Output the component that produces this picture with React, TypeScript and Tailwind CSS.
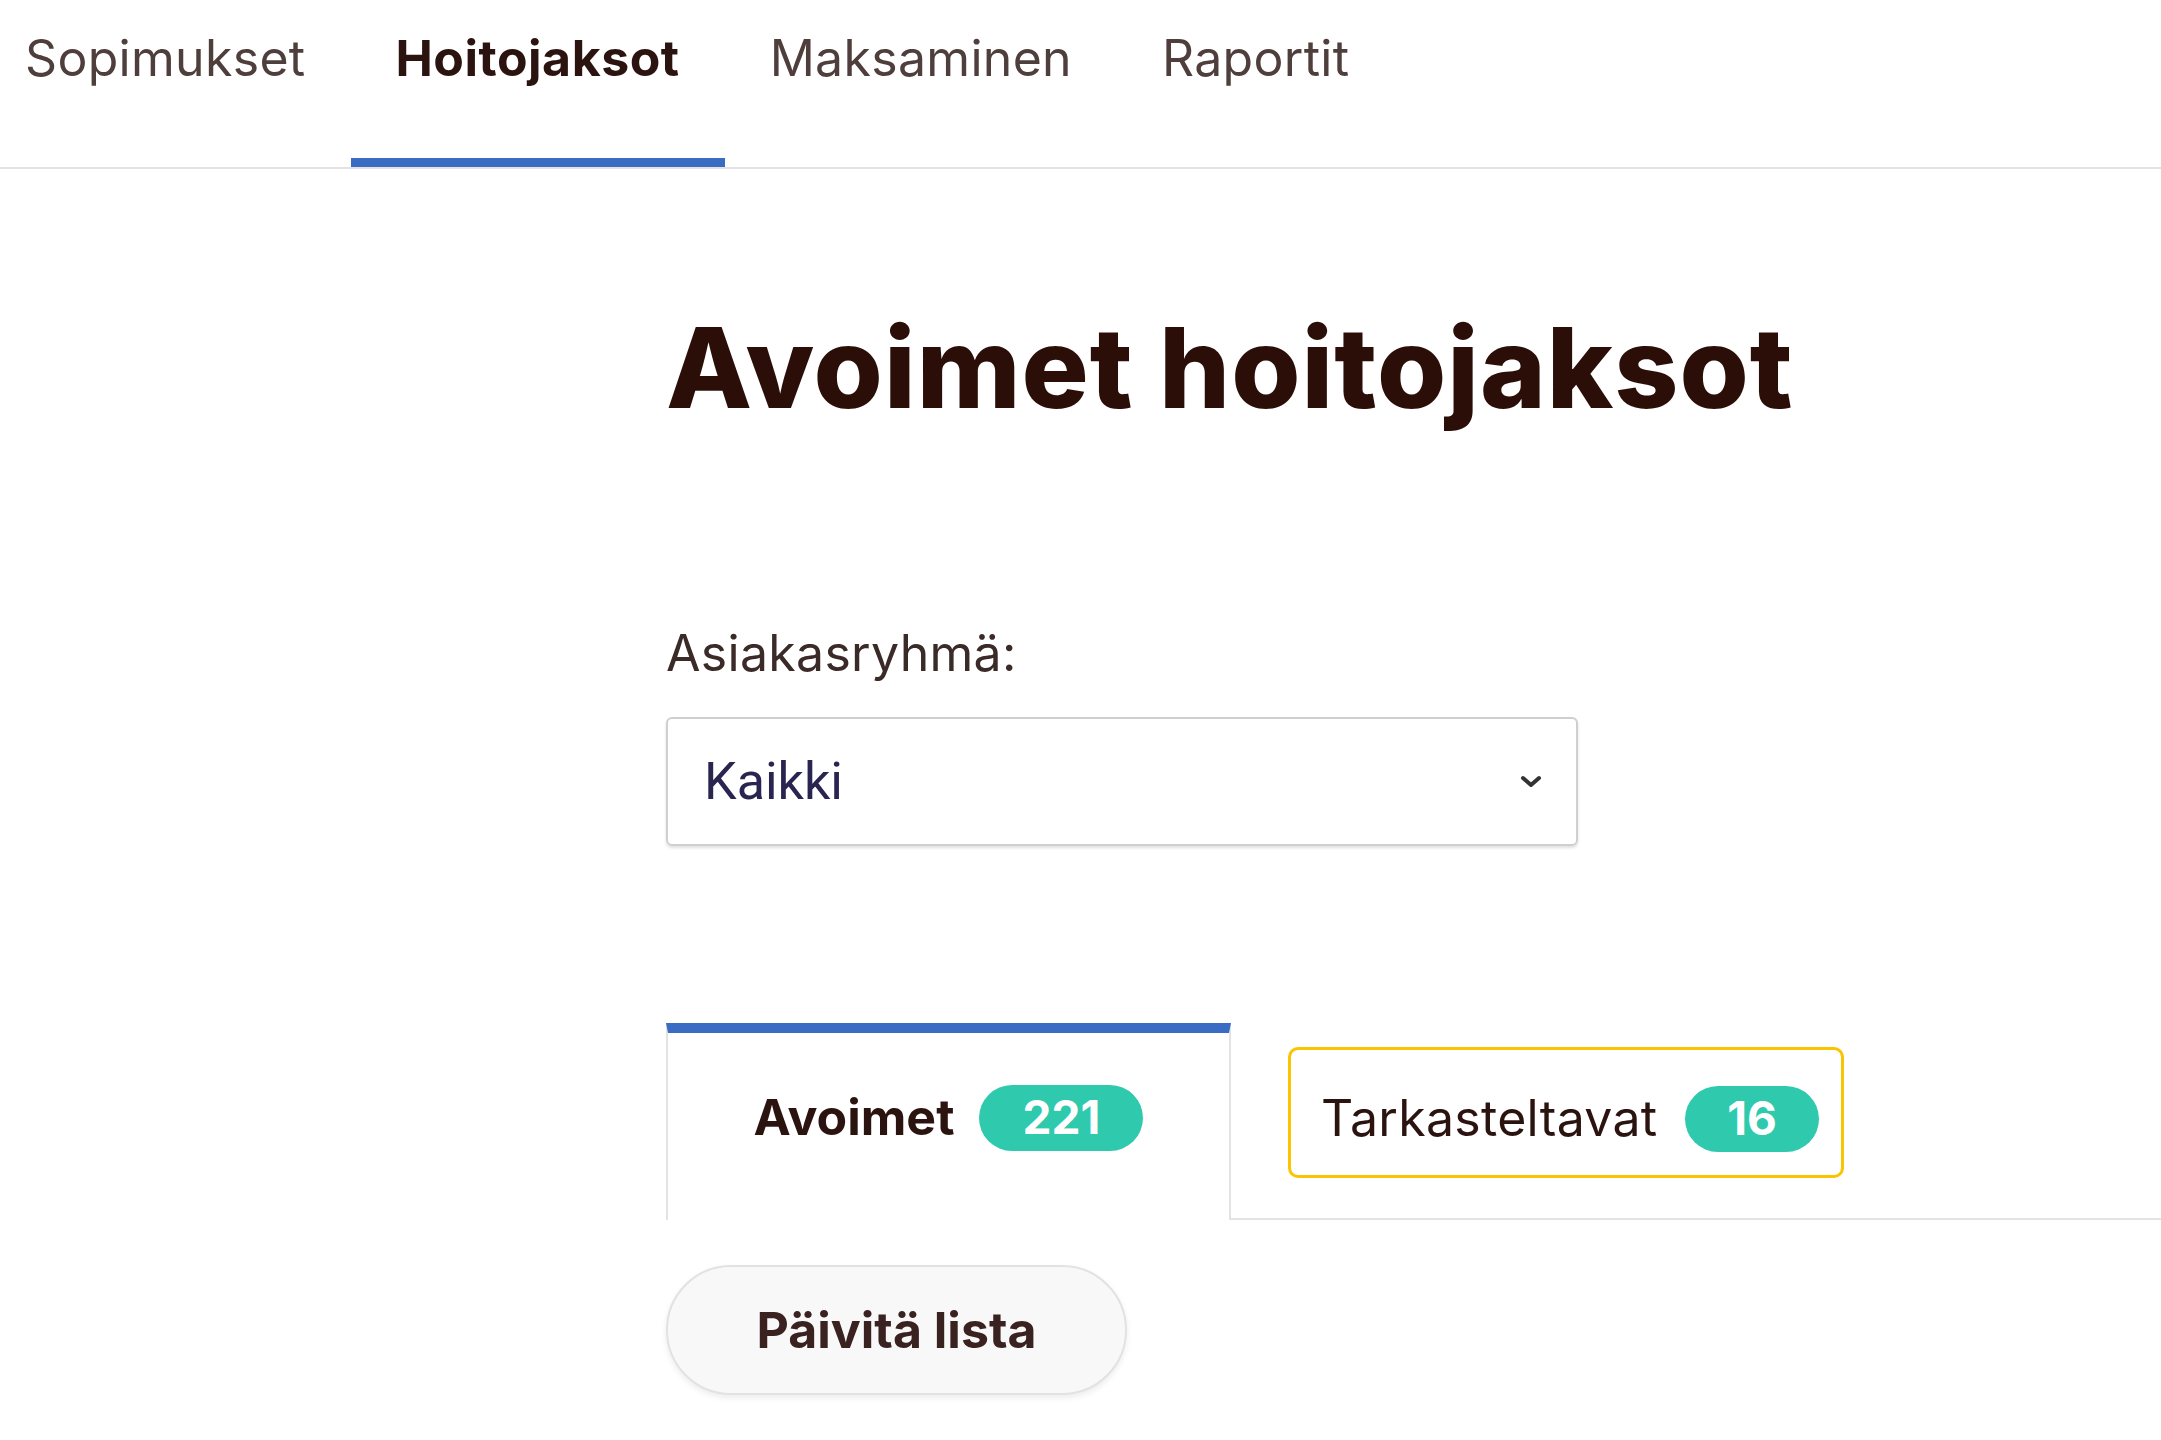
import React from "react";

const navItems = ["Sopimukset", "Hoitojaksot", "Maksaminen", "Raportit"];

export default function App() {
  return (
    <div className="min-h-screen w-full bg-white text-[#2b1410]" style={{ fontFamily: "Inter, 'Noto Sans', sans-serif" }}>
      <nav className="flex border-b-2 border-[#e3e3e3]">
        {navItems.map((item, i) => {
          const active = item === "Hoitojaksot";
          return (
            <div
              key={item}
              className={`h-[167px] flex flex-col ${i === 0 ? "pl-[25px] pr-[45px]" : "px-[45px]"} ${active ? "border-b-[9px] border-[#3b6cc4]" : "border-b-[9px] border-transparent"}`}
            >
              <span className={`pt-[28px] text-[50px] leading-[60px] ${active ? "font-bold text-[#2b1410] tracking-[0.5px]" : "font-normal text-[#4f3f3c] tracking-[0.3px]"}`}>
                {item}
              </span>
            </div>
          );
        })}
      </nav>

      <main className="pl-[666px]">
        <h1 className="pt-[128px] text-[112px] leading-[140px] font-extrabold text-[#2b0e07] tracking-[1px]" style={{ fontFamily: "Inter, 'Noto Sans', sans-serif" }}>
          Avoimet hoitojaksot
        </h1>

        <div className="mt-[186px] text-[50px] leading-[60px] text-[#3b2b28] tracking-[0.3px]">Asiakasryhmä:</div>

        <div className="mt-[34px] w-[912px] h-[129px] rounded-[6px] border-2 border-[#cfcfcf] shadow-[0_2px_3px_rgba(0,0,0,0.12)] flex items-center justify-between pl-[36px] pr-[34px]">
          <span className="text-[52px] text-[#2a2450]" style={{ fontFamily: "Roboto, 'Liberation Sans', sans-serif" }}>Kaikki</span>
          <svg width="22" height="14" viewBox="0 0 22 14" fill="none">
            <path d="M3 3 L11 10 L19 3" stroke="#333" strokeWidth="4" strokeLinecap="round" strokeLinejoin="round" />
          </svg>
        </div>

        <div className="mt-[177px] flex items-start border-b-2 border-[#e3e3e3]">
          <div className="-mb-[2px] w-[565px] h-[197px] bg-white border-t-[10px] border-t-[#3b6cc4] border-l-2 border-r-2 border-l-[#e3e3e3] border-r-[#e3e3e3] flex items-center justify-center gap-[25px] pb-[18px]">
            <span className="text-[50px] font-bold text-[#2b1410]">Avoimet</span>
            <span className="h-[66px] w-[164px] rounded-full bg-[#2fc9ae] text-white text-[46px] font-bold flex items-center justify-center">221</span>
          </div>
          <div className="ml-[57px] mt-[24px] w-[556px] h-[131px] rounded-[10px] border-[3px] border-[#fac400] flex items-center pl-[30px] pr-[22px] pt-[12px] justify-between">
            <span className="text-[50px] font-normal text-[#2b1410] tracking-[0.3px]">Tarkasteltavat</span>
            <span className="h-[66px] w-[134px] rounded-full bg-[#2fc9ae] text-white text-[46px] font-bold flex items-center justify-center">16</span>
          </div>
        </div>

        <button className="mt-[45px] w-[461px] h-[130px] rounded-full border-2 border-[#e2e2e2] bg-[#f8f8f8] shadow-[0_3px_6px_rgba(0,0,0,0.08)] text-[50px] font-bold text-[#3a2220] flex items-center justify-center">
          Päivitä lista
        </button>
      </main>
    </div>
  );
}
